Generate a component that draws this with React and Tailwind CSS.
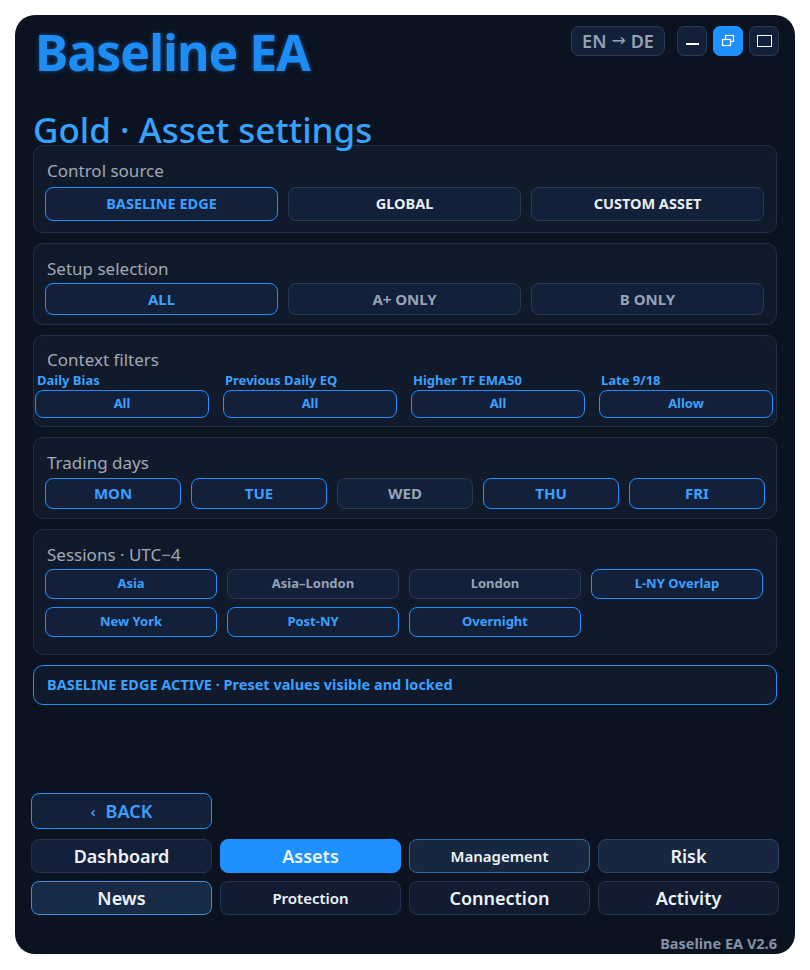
import { useState } from "react";

const FONT = { fontFamily: '"Noto Sans", "Open Sans", sans-serif' };

// shared button looks
const btnOn = "border-[#1e90ff] text-[#3ba0ff]";
const btnOff = "border-[#263a58] text-[#97a3b4]";
const btnOffBright = "border-[#263a58] text-[#e8eef6]";

const Section = ({ label, className = "", children }) => (
  <div className={`rounded-[10px] border border-[#1f3049] bg-[#101a2b] ${className}`}>
    <div className="ml-[13px] h-[22px] text-[17px] leading-[22px] text-[#a0a9b6]">{label}</div>
    {children}
  </div>
);

const Choice = ({ on, dim = true, className = "", children }) => (
  <button
    className={`flex items-center justify-center rounded-[8px] border bg-[#12203a] font-bold ${
      on ? btnOn : dim ? btnOff : btnOffBright
    } ${className}`}
  >
    {children}
  </button>
);

const WinButton = ({ active, children }) => (
  <button
    className={`flex h-[30px] w-[30px] items-center justify-center rounded-[7px] border ${
      active ? "border-[#1e90ff] bg-[#1e90ff]" : "border-[#263a58] bg-[#12203a]"
    }`}
  >
    {children}
  </button>
);

export default function App() {
  const [tab, setTab] = useState("Assets");

  const filters = [
    { label: "Daily Bias", value: "All" },
    { label: "Previous Daily EQ", value: "All" },
    { label: "Higher TF EMA50", value: "All" },
    { label: "Late 9/18", value: "Allow" },
  ];

  const days = [
    { d: "MON", on: true },
    { d: "TUE", on: true },
    { d: "WED", on: false },
    { d: "THU", on: true },
    { d: "FRI", on: true },
  ];

  const sessions = [
    { s: "Asia", on: true },
    { s: "Asia–London", on: false },
    { s: "London", on: false },
    { s: "L-NY Overlap", on: true },
    { s: "New York", on: true },
    { s: "Post-NY", on: true },
    { s: "Overnight", on: true },
  ];

  const nav = [
    { n: "Dashboard", cls: "border-[#22344f] bg-[#12203a] text-[18px]" },
    { n: "Assets", cls: "border-[#1e90ff] bg-[#1e90ff] text-[18px]" },
    { n: "Management", cls: "border-[#2e6aa6] bg-[#16273f] text-[15px]" },
    { n: "Risk", cls: "border-[#2a4466] bg-[#172740] text-[18px]" },
    { n: "News", cls: "border-[#3b8fdb] bg-[#182b46] text-[18px]" },
    { n: "Protection", cls: "border-[#22344f] bg-[#111c31] text-[15px]" },
    { n: "Connection", cls: "border-[#22344f] bg-[#111c31] text-[18px]" },
    { n: "Activity", cls: "border-[#22344f] bg-[#111c31] text-[18px]" },
  ];

  return (
    <div className="min-h-screen bg-white pt-[15px] pl-[15px]" style={FONT}>
      <div className="flex h-[939px] w-[780px] flex-col rounded-[20px] bg-[#0b1220] px-[16px]">
        {/* header */}
        <div className="flex items-start justify-between pt-[11px]">
          <h1 className="ml-[4px] h-[52px] text-[50px] font-bold leading-[52px] tracking-[-1px] text-[#1e8cf5] [text-shadow:0_0_5px_rgba(30,144,255,0.45)]">
            Baseline EA
          </h1>
          <div className="flex items-center">
            <button className="mr-[12px] flex h-[30px] w-[94px] items-center justify-center gap-[5px] rounded-[8px] border border-[#263a58] bg-[#12203a] text-[18px] font-semibold text-[#95a2b3]">
              <span>EN</span>
              <span className="text-[17px] font-normal" style={{ fontFamily: '"DejaVu Sans", sans-serif' }}>→</span>
              <span>DE</span>
            </button>
            <div className="flex gap-[6px]">
              <WinButton>
                <span className="mt-[5px] block h-[2px] w-[13px] bg-white" />
              </WinButton>
              <WinButton active>
                <svg width="14" height="14" viewBox="0 0 14 14" fill="none" stroke="white" strokeWidth="1.2">
                  <rect x="4.5" y="1.5" width="8" height="6" />
                  <rect x="1.5" y="5.5" width="8" height="6" fill="#1e90ff" />
                </svg>
              </WinButton>
              <WinButton>
                <span className="block h-[12px] w-[15px] border border-white" />
              </WinButton>
            </div>
          </div>
        </div>

        <h2 className="relative z-10 mt-[35px] ml-[2px] h-[34px] text-[35px] font-medium leading-[34px] text-[#36a3ff]">
          Gold · Asset settings
        </h2>

        <div className="mx-[2px] mt-[-2px] flex flex-col gap-[10px]">
          <Section label="Control source" className="h-[88px] pt-[14px]">
            <div className="mt-[5px] grid grid-cols-3 gap-[10px] pl-[11px] pr-[12px]">
              <Choice on className="h-[34px] text-[14.5px]">BASELINE EDGE</Choice>
              <Choice dim={false} className="h-[34px] text-[14.5px]">GLOBAL</Choice>
              <Choice dim={false} className="h-[34px] text-[14.5px]">CUSTOM ASSET</Choice>
            </div>
          </Section>

          <Section label="Setup selection" className="h-[82px] pt-[14px]">
            <div className="mt-[3px] grid grid-cols-3 gap-[10px] pl-[11px] pr-[12px]">
              <Choice on className="h-[32px] text-[15px]">ALL</Choice>
              <Choice className="h-[32px] text-[15px]">A+ ONLY</Choice>
              <Choice className="h-[32px] text-[15px]">B ONLY</Choice>
            </div>
          </Section>

          <Section label="Context filters" className="h-[92px] pt-[13px]">
            <div className="grid grid-cols-4 gap-x-[14px] pl-[1px] pr-[3px]">
              {filters.map((f) => (
                <div key={f.label} className="flex flex-col">
                  <div className="ml-[2px] h-[19px] text-[13px] font-bold leading-[19px] text-[#3ba0ff]">
                    {f.label}
                  </div>
                  <Choice on className="h-[28px] text-[13px]">{f.value}</Choice>
                </div>
              ))}
            </div>
          </Section>

          <Section label="Trading days" className="h-[82px] pt-[14px]">
            <div className="mt-[4px] grid grid-cols-5 gap-[10px] pl-[11px] pr-[11px]">
              {days.map((x) => (
                <Choice key={x.d} on={x.on} className="h-[31px] text-[15px]">
                  {x.d}
                </Choice>
              ))}
            </div>
          </Section>

          <Section label="Sessions · UTC−4" className="h-[126px] pt-[14px]">
            <div className="mt-[3px] grid grid-cols-4 gap-x-[10px] gap-y-[8px] pl-[11px] pr-[13px]">
              {sessions.map((x) => (
                <Choice key={x.s} on={x.on} className="h-[30px] text-[13px]">
                  {x.s}
                </Choice>
              ))}
            </div>
          </Section>

          <div className="flex h-[40px] items-center rounded-[10px] border border-[#1e90ff] bg-[#101a2b] pl-[13px] text-[14.5px] font-bold text-[#3ba0ff]">
            BASELINE EDGE ACTIVE · Preset values visible and locked
          </div>
        </div>

        {/* bottom navigation */}
        <div className="mt-auto">
          <button className="flex h-[36px] w-[181px] items-center justify-center gap-[10px] rounded-[8px] border border-[#1e90ff] bg-[#12203a] text-[18px] font-semibold text-[#3ba0ff]">
            <span className="text-[14px]">‹</span>
            <span>BACK</span>
          </button>
          <div className="mt-[10px] grid grid-cols-4 gap-[8px]">
            {nav.map((x) => (
              <button
                key={x.n}
                onClick={() => setTab(x.n)}
                className={`flex h-[34px] items-center justify-center rounded-[8px] border font-semibold text-[#eef3f9] ${x.cls}`}
              >
                {x.n}
              </button>
            ))}
          </div>
          <div className="mt-[20px] mb-[3px] h-[16px] pr-[2px] text-right text-[14.5px] font-bold leading-[16px] text-[#8592a4]">
            Baseline EA V2.6
          </div>
        </div>
      </div>
    </div>
  );
}
